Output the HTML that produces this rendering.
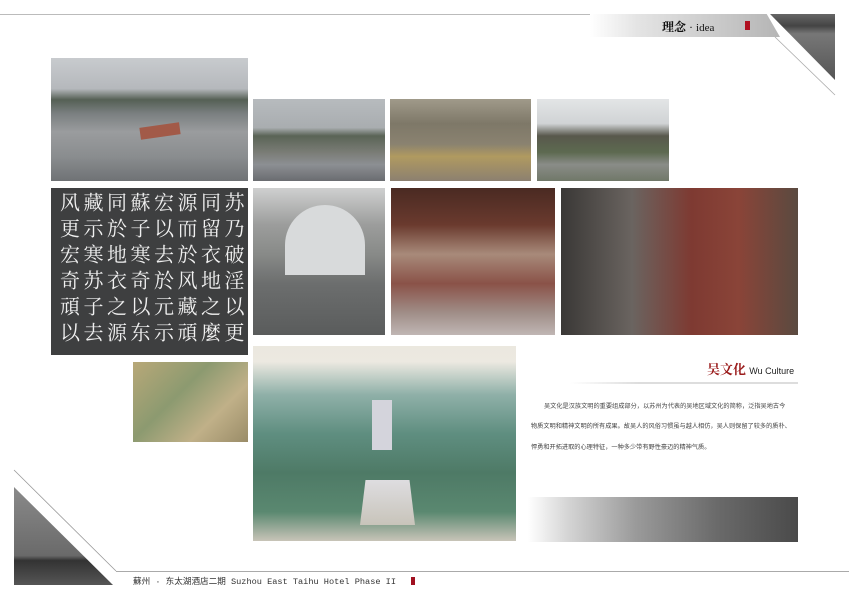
<!DOCTYPE html>
<html><head><meta charset="utf-8"><style>
*{margin:0;padding:0;box-sizing:border-box}
body{width:849px;height:600px;background:#fff;position:relative;overflow:hidden;font-family:"Liberation Sans","Noto Sans CJK SC",sans-serif}
.a{position:absolute}
.t{position:absolute;left:531px;font:6.2px 'Noto Sans CJK SC',sans-serif;color:#444;white-space:nowrap}
</style></head><body>
<!-- top header -->
<div class="a" style="left:0;top:14px;width:600px;height:1px;background:#bbb"></div>
<div class="a" style="left:590px;top:14px;width:190px;height:23px;background:linear-gradient(90deg,#fff 0%,#e4e4e4 25%,#c8c8c8 70%,#b5b5b5 100%);clip-path:polygon(0 0,93% 0,100% 100%,0 100%)"></div>
<div class="a" style="left:662px;top:18px;font:bold 12px 'Liberation Serif','Noto Serif CJK SC',serif;color:#111">理念 <span style="font-weight:normal">·</span> <span style="font-weight:normal;font-size:11px">idea</span></div>
<div class="a" style="left:745px;top:21px;width:5px;height:9px;background:#b01020"></div>
<div class="a" style="left:770px;top:14px;width:65px;height:66px;background:linear-gradient(180deg,#666 0%,#444 18%,#777 30%,#555 100%);clip-path:polygon(0 0,100% 0,100% 100%)"></div>
<svg class="a" style="left:0;top:0" width="849" height="600"><line x1="775" y1="37" x2="835" y2="95" stroke="#aaa" stroke-width="0.8"/><line x1="14" y1="470" x2="116" y2="571" stroke="#999" stroke-width="0.8"/></svg>
<!-- row 1 -->
<div class="a" style="left:51px;top:58px;width:197px;height:123px;background:linear-gradient(180deg,#c8cbce 0%,#b5b8bc 25%,#556055 34%,#7a7f80 45%,#9a9c9e 60%,#8a8d8f 80%,#6f7275 100%)"></div>
<div class="a" style="left:140px;top:125px;width:40px;height:12px;background:#a25a48;transform:rotate(-8deg)"></div>
<div class="a" style="left:253px;top:99px;width:132px;height:82px;background:linear-gradient(180deg,#b7bbbe 0%,#a9adb0 35%,#5a6456 45%,#7a7c76 65%,#8c8f93 80%,#6a6c70 100%)"></div>
<div class="a" style="left:390px;top:99px;width:141px;height:82px;background:linear-gradient(180deg,#a09a8a 0%,#7e7868 30%,#8a8270 55%,#b09a60 70%,#8c8070 100%)"></div>
<div class="a" style="left:537px;top:99px;width:132px;height:82px;background:linear-gradient(180deg,#e3e5e6 0%,#d0d3d5 30%,#58584c 45%,#5d6a50 65%,#8a8c88 80%,#707868 100%)"></div>
<!-- row 2 -->
<div class="a" style="left:51px;top:188px;width:197px;height:167px;background:#3e3f40;overflow:hidden"></div>
<div class="a" style="left:56px;top:192px;width:190px;height:162px;font:20px 'Noto Serif CJK SC',serif;color:#f0f0f0;writing-mode:vertical-rl;line-height:23.5px;letter-spacing:6px;overflow:hidden">苏乃破淫以更同留衣地之麼源而於风藏頑宏以去於元示蘇子寒奇以东同於地衣之源藏示寒苏子去风更宏奇頑以破</div>
<div class="a" style="left:253px;top:188px;width:132px;height:147px;background:linear-gradient(180deg,#cfd0d0 0%,#9c9d9c 25%,#888a88 45%,#6c6e6e 65%,#5a5c5c 100%)"></div>
<div class="a" style="left:285px;top:205px;width:80px;height:70px;border-radius:40px 40px 0 0;background:#d8dadb"></div>
<div class="a" style="left:391px;top:188px;width:164px;height:147px;background:linear-gradient(180deg,#4a2a22 0%,#6a3a2e 25%,#a88a7a 45%,#8a5248 65%,#a08e88 85%,#c0b6b4 100%)"></div>
<div class="a" style="left:561px;top:188px;width:237px;height:147px;background:linear-gradient(90deg,#3a3836 0%,#6a6460 30%,#7e3a32 55%,#8a4438 75%,#5a4a40 100%)"></div>
<!-- row 3 -->
<div class="a" style="left:133px;top:362px;width:115px;height:80px;background:linear-gradient(135deg,#b8a878 0%,#8c9a70 40%,#c0b088 70%,#9a8c68 100%)"></div>
<div class="a" style="left:253px;top:346px;width:263px;height:195px;background:linear-gradient(180deg,#ebe8df 0%,#ece9e1 8%,#8fb0a8 25%,#5f8e80 45%,#4e7a66 65%,#5a8870 85%,#c8c4b8 100%)"></div>
<div class="a" style="left:360px;top:480px;width:55px;height:45px;background:linear-gradient(180deg,#dedde0,#c8c4ba);clip-path:polygon(10% 0,90% 0,100% 100%,0 100%)"></div>
<div class="a" style="left:372px;top:400px;width:20px;height:50px;background:#d4d4dc"></div>
<!-- right text -->
<div class="a" style="left:707px;top:359px;font:bold 13px 'Noto Serif CJK SC',serif;color:#9a1a1a">吴文化 <span style="font:9px 'Liberation Sans',sans-serif;color:#222">Wu Culture</span></div>
<div class="a" style="left:570px;top:382px;width:228px;height:2px;background:linear-gradient(90deg,#fff,#ddd 30%,#ddd)"></div>
<div class="t" style="top:401px;left:544px">吴文化是汉族文明的重要组成部分，以苏州为代表的吴地区域文化的简称，泛指吴地古今</div>
<div class="t" style="top:421px">物质文明和精神文明的所有成果。故吴人的风俗习惯虽与越人相仿，吴人则保留了较多的质朴、</div>
<div class="t" style="top:442px">悍勇和开拓进取的心理特征，一种多少带有野性豪迈的精神气质。</div>
<div class="a" style="left:528px;top:497px;width:270px;height:45px;background:linear-gradient(90deg,#fff 0%,#d4d4d4 15%,#9a9a9a 40%,#6a6a6a 70%,#4a4a4a 100%)"></div>
<!-- bottom -->
<div class="a" style="left:14px;top:487px;width:99px;height:98px;background:linear-gradient(180deg,#8a8a8a 0%,#6a6a6a 70%,#333 75%,#555 100%);clip-path:polygon(0 0,100% 100%,0 100%)"></div>
<div class="a" style="left:116px;top:571px;width:733px;height:1px;background:#aaa"></div>
<div class="a" style="left:133px;top:575px;font:8.6px 'Liberation Mono','Noto Sans CJK SC',monospace;color:#333;white-space:nowrap">蘇州 · 东太湖酒店二期 Suzhou East Taihu Hotel Phase II</div>
<div class="a" style="left:411px;top:577px;width:4px;height:8px;background:#a01020"></div>
</body></html>
